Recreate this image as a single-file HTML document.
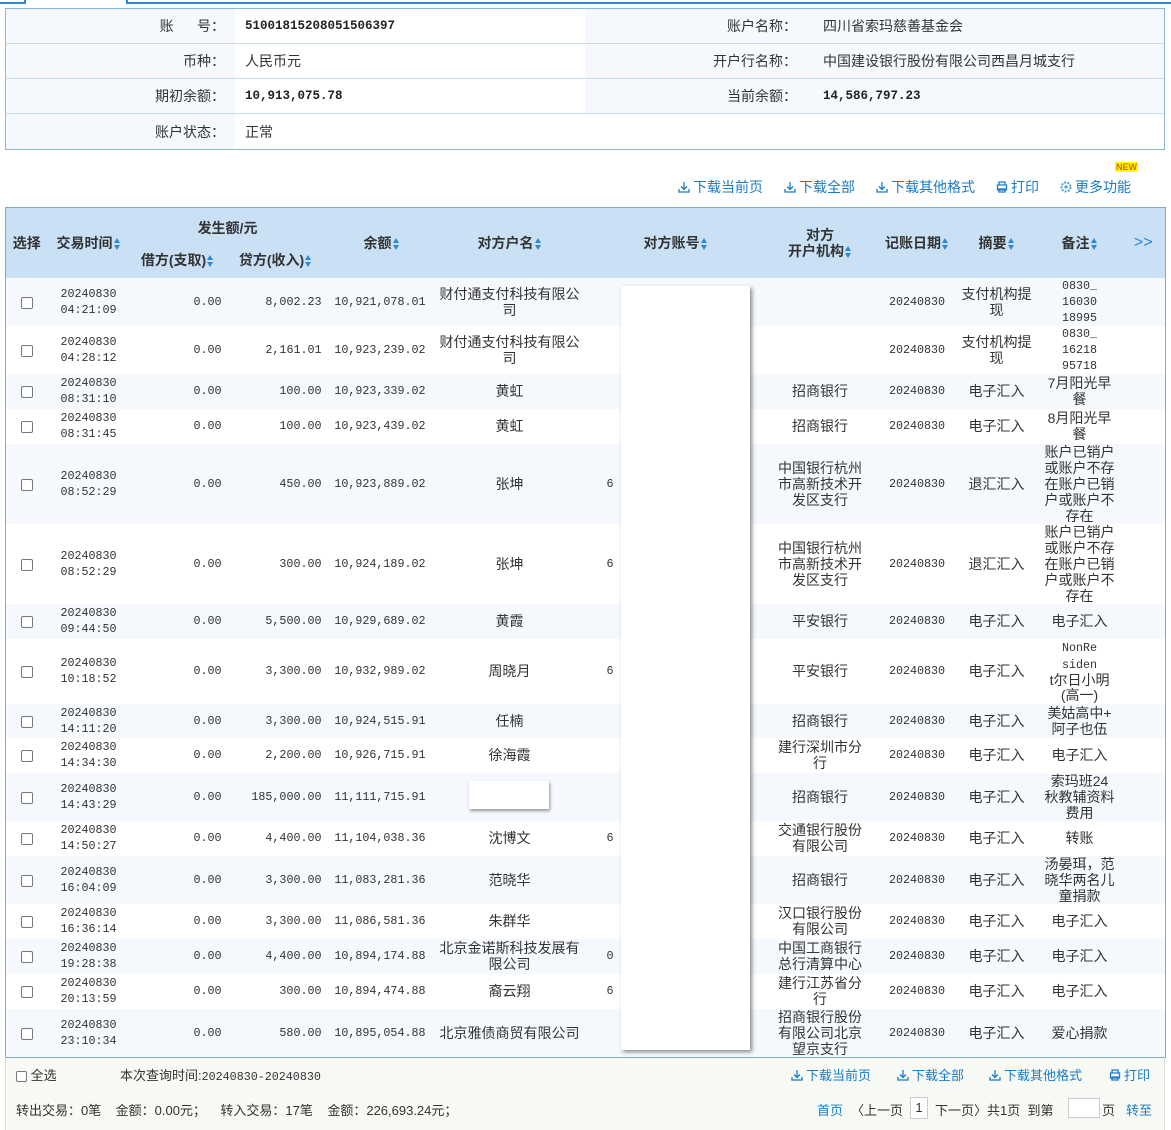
<!DOCTYPE html>
<html><head><meta charset="utf-8"><style>
*{margin:0;padding:0;box-sizing:border-box}
body{width:1171px;height:1130px;background:#fff;font-family:"Liberation Sans","Noto Sans CJK SC",sans-serif;font-size:14px;color:#333;position:relative;overflow:hidden}
.abs{position:absolute}
.m{font-family:"Liberation Mono","Noto Sans CJK SC",monospace;font-size:11.7px;line-height:16px}
.info{position:absolute;left:5px;top:8px;width:1160px;border:1px solid #8fb4dc}
.info .r{height:35px;border-bottom:1px solid #c9dbed;display:flex;align-items:center;background:#f5f9fd}
.info .r:last-child{border-bottom:none}
.info .l{width:229px;text-align:right;padding-right:10px}
.info .v{width:350px;background:#fff;height:100%;display:flex;align-items:center;padding-left:10px}
.info .l2{width:212px;text-align:right}
.info .v2{padding-left:26px}
.b{font-weight:bold;font-family:"Liberation Mono","Noto Sans CJK SC",monospace;font-size:12.5px;color:#222}
.tools{position:absolute;top:177px;color:#1a7bc8;font-size:14px}
svg.i{width:12px;height:12px;vertical-align:-1px;margin-right:3px}
table{position:absolute;left:5px;top:207px;width:1160px;border-collapse:collapse;table-layout:fixed;border:1px solid #7fa9d8}
th{background:#c9e0f5;font-weight:bold;color:#333;font-size:14px;line-height:16px;white-space:nowrap}
td{line-height:16px;text-align:center;vertical-align:middle;padding:0;overflow:hidden}
tr.o td{background:#f5f9fd}
.rt{text-align:right;padding-right:4px}
.s{display:inline-block;width:7px;height:14px;vertical-align:middle;position:relative;margin-left:1px}
.s:before{content:"";position:absolute;left:0;top:1px;border:3.5px solid transparent;border-bottom:5px solid #2a8ad8;border-top:none}
.s:after{content:"";position:absolute;left:0;top:8px;border:3.5px solid transparent;border-top:5px solid #2a8ad8;border-bottom:none}
.cb{display:inline-block;width:12px;height:12px;border:1px solid #777;border-radius:2px;background:#fff;vertical-align:middle}
.foot{position:absolute;left:5px;top:1057px;width:1160px;height:73px;background:#f7f9f5;border-top:1px solid #7fa9d8;border-left:1px solid #ddd;border-right:1px solid #ddd;font-size:13px}
.blue{color:#1a7bc8}
.sm td:nth-child(10){padding:0 6px}
.sm td:nth-child(11){padding:0 6px}
</style></head><body>
<svg width="0" height="0" style="position:absolute"><defs>
<symbol id="dl" viewBox="0 0 12 12"><path d="M6 1v7M3 5.5l3 3 3-3M1 8v3h10V8" fill="none" stroke="#1a7bc8" stroke-width="1.3"/></symbol>
<symbol id="pr" viewBox="0 0 12 12"><path d="M3 4V1h6v3M1.5 4h9v5h-9zM3 8h6v3H3z" fill="none" stroke="#1a7bc8" stroke-width="1.3"/></symbol>
<symbol id="gr" viewBox="0 0 12 12"><circle cx="6" cy="6" r="4.5" fill="none" stroke="#4aa0e0" stroke-width="2" stroke-dasharray="2 1.2"/><circle cx="6" cy="6" r="1.6" fill="#4aa0e0"/></symbol>
</defs></svg>
<div class="abs" style="left:0;top:0;width:26px;height:4px;border:2px solid #2a8ad8;border-top:none;border-left:none"></div>
<div class="abs" style="left:126px;top:0;width:1045px;height:4px;border:2px solid #2a8ad8;border-top:none;border-right:none"></div>

<div class="info">
<div class="r"><div class="l">账&nbsp;&nbsp;&nbsp;&nbsp;&nbsp;&nbsp;号：</div><div class="v b">51001815208051506397</div><div class="l2">账户名称：</div><div class="v2">四川省索玛慈善基金会</div></div>
<div class="r"><div class="l">币种：</div><div class="v">人民币元</div><div class="l2">开户行名称：</div><div class="v2">中国建设银行股份有限公司西昌月城支行</div></div>
<div class="r"><div class="l">期初余额：</div><div class="v b">10,913,075.78</div><div class="l2">当前余额：</div><div class="v2 b">14,586,797.23</div></div>
<div class="r"><div class="l">账户状态：</div><div class="v">正常</div><div style="flex:1;background:#fff;height:100%"></div></div>
</div>

<div class="abs" style="left:1115px;top:162px;font-size:9px;font-weight:bold;color:#e53;background:#ff0;line-height:10px;padding:0 1px">NEW</div>
<div class="tools" style="left:678px"><svg class="i"><use href="#dl"/></svg>下载当前页</div>
<div class="tools" style="left:784px"><svg class="i"><use href="#dl"/></svg>下载全部</div>
<div class="tools" style="left:876px"><svg class="i"><use href="#dl"/></svg>下载其他格式</div>
<div class="tools" style="left:996px"><svg class="i"><use href="#pr"/></svg>打印</div>
<div class="tools" style="left:1060px"><svg class="i"><use href="#gr"/></svg>更多功能</div>

<table class="sm">
<colgroup><col style="width:42px"><col style="width:82px"><col style="width:96px"><col style="width:100px"><col style="width:104px"><col style="width:160px"><col style="width:172px"><col style="width:117px"><col style="width:77px"><col style="width:82px"><col style="width:84px"><col style="width:44px"></colgroup>
<tr style="height:35px"><th rowspan="2">选择</th><th rowspan="2">交易时间<span class="s"></span></th><th colspan="2" style="padding-top:6px">发生额/元</th><th rowspan="2" style="text-align:right;padding-right:30px">余额<span class="s"></span></th><th rowspan="2">对方户名<span class="s"></span></th><th rowspan="2">对方账号<span class="s"></span></th><th rowspan="2">对方<br>开户机构<span class="s"></span></th><th rowspan="2">记账日期<span class="s"></span></th><th rowspan="2">摘要<span class="s"></span></th><th rowspan="2">备注<span class="s"></span></th><th rowspan="2" style="color:#2a8ad8;font-weight:normal;font-size:16px">&gt;&gt;</th></tr>
<tr style="height:35px"><th>借方(支取)<span class="s"></span></th><th>贷方(收入)<span class="s"></span></th></tr>

<tr class="o" style="height:48px"><td><span class="cb"></span></td><td class="m">20240830<br>04:21:09</td><td class="m rt">0.00</td><td class="m rt">8,002.23</td><td class="m rt">10,921,078.01</td><td>财付通支付科技有限公<br>司</td><td></td><td></td><td class="m">20240830</td><td>支付机构提现</td><td class="m">0830_<br>16030<br>18995</td><td></td></tr>
<tr style="height:48px"><td><span class="cb"></span></td><td class="m">20240830<br>04:28:12</td><td class="m rt">0.00</td><td class="m rt">2,161.01</td><td class="m rt">10,923,239.02</td><td>财付通支付科技有限公<br>司</td><td></td><td></td><td class="m">20240830</td><td>支付机构提现</td><td class="m">0830_<br>16218<br>95718</td><td></td></tr>
<tr class="o" style="height:35px"><td><span class="cb"></span></td><td class="m">20240830<br>08:31:10</td><td class="m rt">0.00</td><td class="m rt">100.00</td><td class="m rt">10,923,339.02</td><td>黄虹</td><td></td><td>招商银行</td><td class="m">20240830</td><td>电子汇入</td><td>7月阳光早餐</td><td></td></tr>
<tr style="height:35px"><td><span class="cb"></span></td><td class="m">20240830<br>08:31:45</td><td class="m rt">0.00</td><td class="m rt">100.00</td><td class="m rt">10,923,439.02</td><td>黄虹</td><td></td><td>招商银行</td><td class="m">20240830</td><td>电子汇入</td><td>8月阳光早餐</td><td></td></tr>
<tr class="o" style="height:80px"><td><span class="cb"></span></td><td class="m">20240830<br>08:52:29</td><td class="m rt">0.00</td><td class="m rt">450.00</td><td class="m rt">10,923,889.02</td><td>张坤</td><td style="text-align:left;padding-left:17px" class="m">6</td><td>中国银行杭州<br>市高新技术开<br>发区支行</td><td class="m">20240830</td><td>退汇汇入</td><td>账户已销户<br>或账户不存<br>在账户已销<br>户或账户不<br>存在</td><td></td></tr>
<tr style="height:80px"><td><span class="cb"></span></td><td class="m">20240830<br>08:52:29</td><td class="m rt">0.00</td><td class="m rt">300.00</td><td class="m rt">10,924,189.02</td><td>张坤</td><td style="text-align:left;padding-left:17px" class="m">6</td><td>中国银行杭州<br>市高新技术开<br>发区支行</td><td class="m">20240830</td><td>退汇汇入</td><td>账户已销户<br>或账户不存<br>在账户已销<br>户或账户不<br>存在</td><td></td></tr>
<tr class="o" style="height:35px"><td><span class="cb"></span></td><td class="m">20240830<br>09:44:50</td><td class="m rt">0.00</td><td class="m rt">5,500.00</td><td class="m rt">10,929,689.02</td><td>黄霞</td><td></td><td>平安银行</td><td class="m">20240830</td><td>电子汇入</td><td>电子汇入</td><td></td></tr>
<tr style="height:65px"><td><span class="cb"></span></td><td class="m">20240830<br>10:18:52</td><td class="m rt">0.00</td><td class="m rt">3,300.00</td><td class="m rt">10,932,989.02</td><td>周晓月</td><td style="text-align:left;padding-left:17px" class="m">6</td><td>平安银行</td><td class="m">20240830</td><td>电子汇入</td><td style="line-height:15px"><span class="m" style="line-height:15px">NonRe<br>siden</span><br>t尔日小明<br>(高一)</td><td></td></tr>
<tr class="o" style="height:34px"><td><span class="cb"></span></td><td class="m">20240830<br>14:11:20</td><td class="m rt">0.00</td><td class="m rt">3,300.00</td><td class="m rt">10,924,515.91</td><td>任楠</td><td></td><td>招商银行</td><td class="m">20240830</td><td>电子汇入</td><td>美姑高中+<br>阿子也伍</td><td></td></tr>
<tr style="height:35px"><td><span class="cb"></span></td><td class="m">20240830<br>14:34:30</td><td class="m rt">0.00</td><td class="m rt">2,200.00</td><td class="m rt">10,926,715.91</td><td>徐海霞</td><td></td><td>建行深圳市分<br>行</td><td class="m">20240830</td><td>电子汇入</td><td>电子汇入</td><td></td></tr>
<tr class="o" style="height:48px"><td><span class="cb"></span></td><td class="m">20240830<br>14:43:29</td><td class="m rt">0.00</td><td class="m rt">185,000.00</td><td class="m rt">11,111,715.91</td><td></td><td></td><td>招商银行</td><td class="m">20240830</td><td>电子汇入</td><td>索玛班24<br>秋教辅资料<br>费用</td><td></td></tr>
<tr style="height:35px"><td><span class="cb"></span></td><td class="m">20240830<br>14:50:27</td><td class="m rt">0.00</td><td class="m rt">4,400.00</td><td class="m rt">11,104,038.36</td><td>沈博文</td><td style="text-align:left;padding-left:17px" class="m">6</td><td>交通银行股份<br>有限公司</td><td class="m">20240830</td><td>电子汇入</td><td>转账</td><td></td></tr>
<tr class="o" style="height:48px"><td><span class="cb"></span></td><td class="m">20240830<br>16:04:09</td><td class="m rt">0.00</td><td class="m rt">3,300.00</td><td class="m rt">11,083,281.36</td><td>范晓华</td><td></td><td>招商银行</td><td class="m">20240830</td><td>电子汇入</td><td>汤晏珥，范<br>晓华两名儿<br>童捐款</td><td></td></tr>
<tr style="height:35px"><td><span class="cb"></span></td><td class="m">20240830<br>16:36:14</td><td class="m rt">0.00</td><td class="m rt">3,300.00</td><td class="m rt">11,086,581.36</td><td>朱群华</td><td></td><td>汉口银行股份<br>有限公司</td><td class="m">20240830</td><td>电子汇入</td><td>电子汇入</td><td></td></tr>
<tr class="o" style="height:35px"><td><span class="cb"></span></td><td class="m">20240830<br>19:28:38</td><td class="m rt">0.00</td><td class="m rt">4,400.00</td><td class="m rt">10,894,174.88</td><td>北京金诺斯科技发展有<br>限公司</td><td style="text-align:left;padding-left:17px" class="m">0</td><td>中国工商银行<br>总行清算中心</td><td class="m">20240830</td><td>电子汇入</td><td>电子汇入</td><td></td></tr>
<tr style="height:35px"><td><span class="cb"></span></td><td class="m">20240830<br>20:13:59</td><td class="m rt">0.00</td><td class="m rt">300.00</td><td class="m rt">10,894,474.88</td><td>裔云翔</td><td style="text-align:left;padding-left:17px" class="m">6</td><td>建行江苏省分<br>行</td><td class="m">20240830</td><td>电子汇入</td><td>电子汇入</td><td></td></tr>
<tr class="o" style="height:48px"><td><span class="cb"></span></td><td class="m">20240830<br>23:10:34</td><td class="m rt">0.00</td><td class="m rt">580.00</td><td class="m rt">10,895,054.88</td><td>北京雅债商贸有限公司</td><td></td><td>招商银行股份<br>有限公司北京<br>望京支行</td><td class="m">20240830</td><td>电子汇入</td><td>爱心捐款</td><td></td></tr>
</table>

<div class="abs" style="left:621px;top:286px;width:129px;height:764px;background:#fff;box-shadow:2px 2px 4px rgba(0,0,0,.45)"></div>
<div class="abs" style="left:469px;top:781px;width:80px;height:28px;background:#fff;box-shadow:1px 2px 3px rgba(0,0,0,.4)"></div>

<div class="foot">
<div class="abs" style="left:10px;top:7px"><span class="cb" style="width:11px;height:11px"></span> 全选</div>
<div class="abs" style="left:114px;top:7px">本次查询时间:<span class="m" style="font-size:11.7px">20240830-20240830</span></div>
<div class="abs blue" style="left:785px;top:7px"><svg class="i"><use href="#dl"/></svg>下载当前页</div>
<div class="abs blue" style="left:891px;top:7px"><svg class="i"><use href="#dl"/></svg>下载全部</div>
<div class="abs blue" style="left:983px;top:7px"><svg class="i"><use href="#dl"/></svg>下载其他格式</div>
<div class="abs blue" style="left:1103px;top:7px"><svg class="i"><use href="#pr"/></svg>打印</div>
<div class="abs" style="left:10px;top:42px">转出交易：0笔&nbsp;&nbsp;&nbsp;&nbsp;金额：0.00元；&nbsp;&nbsp;&nbsp;&nbsp;转入交易：17笔&nbsp;&nbsp;&nbsp;&nbsp;金额：226,693.24元；</div>
<div class="abs blue" style="left:811px;top:42px">首页</div>
<div class="abs" style="left:845px;top:42px">〈上一页</div>
<div class="abs" style="left:904px;top:39px;width:18px;height:22px;border:1px solid #ccc;background:#fff;text-align:center;line-height:20px">1</div>
<div class="abs" style="left:929px;top:42px">下一页〉共1页&nbsp;&nbsp;到第</div>
<div class="abs" style="left:1062px;top:40px;width:32px;height:20px;border:1px solid #ccc;background:#fff"></div>
<div class="abs" style="left:1096px;top:42px">页</div>
<div class="abs blue" style="left:1120px;top:42px">转至</div>
</div>
</body></html>
